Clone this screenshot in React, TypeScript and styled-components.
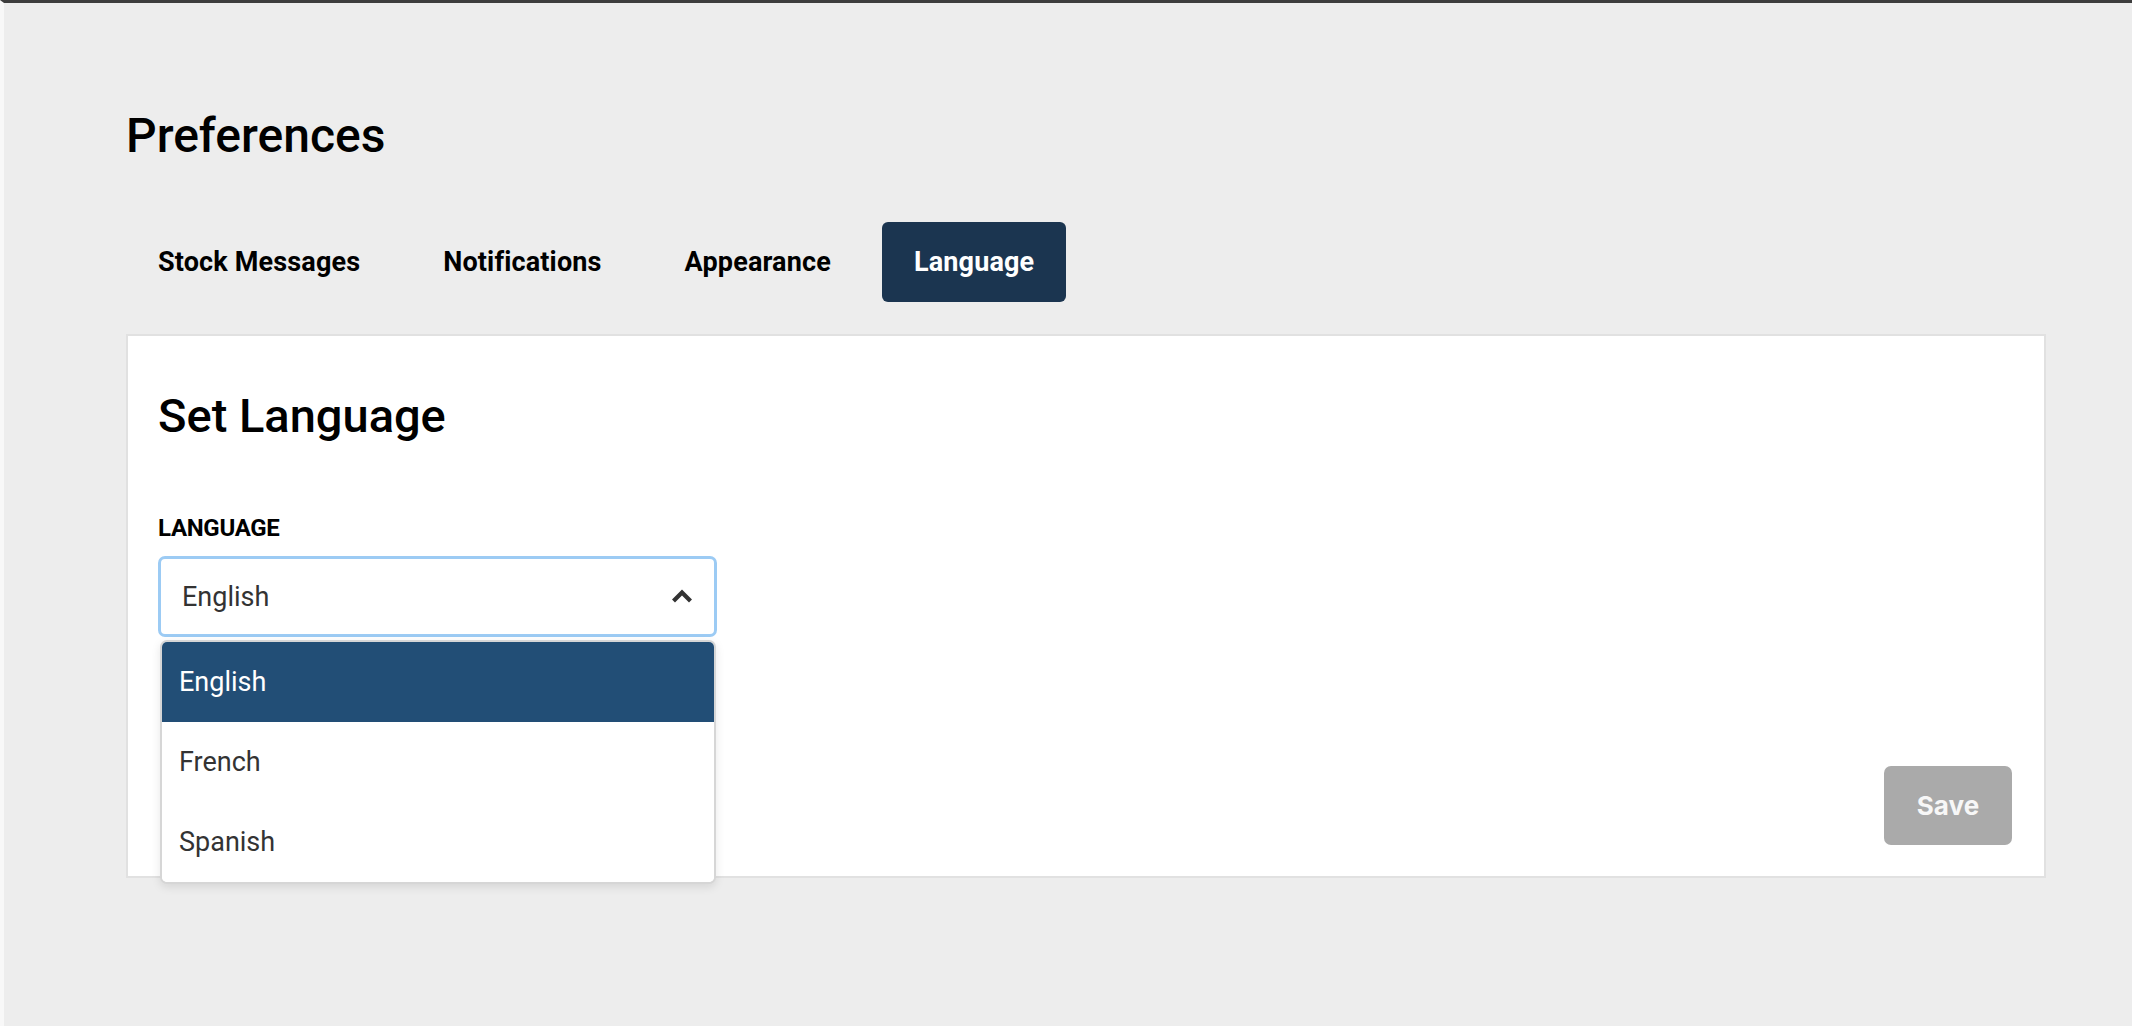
import { useState } from 'react'
import styled, { createGlobalStyle } from 'styled-components'

const GlobalStyle = createGlobalStyle`
  html, body {
    margin: 0;
    padding: 0;
  }
  body {
    font-family: Roboto, "Noto Sans", Arial, sans-serif;
    color: #000;
  }
  * {
    box-sizing: border-box;
  }
`

const tabs = ['Stock Messages', 'Notifications', 'Appearance', 'Language']
const languages = ['English', 'French', 'Spanish']

export default function App() {
  const [activeTab, setActiveTab] = useState('Language')
  const [language, setLanguage] = useState('English')

  return (
    <Frame>
      <GlobalStyle />
      <Main>
        <PageTitle>Preferences</PageTitle>
        <TabRow>
          {tabs.map((tab) => (
            <Tab key={tab} $active={tab === activeTab} onClick={() => setActiveTab(tab)}>
              {tab}
            </Tab>
          ))}
        </TabRow>
        <Panel>
          <PanelTitle>Set Language</PanelTitle>
          <FieldLabel>Language</FieldLabel>
          <SelectWrap>
            <SelectBox>
              <span>{language}</span>
              <svg width="24" height="16" viewBox="0 0 24 16">
                <polyline
                  points="3.5,13 12,4.5 20.5,13"
                  fill="none"
                  stroke="#333"
                  strokeWidth="4.2"
                  strokeLinejoin="miter"
                />
              </svg>
            </SelectBox>
            <Menu>
              {languages.map((lang) => (
                <MenuOption key={lang} $selected={lang === language} onClick={() => setLanguage(lang)}>
                  {lang}
                </MenuOption>
              ))}
            </Menu>
          </SelectWrap>
          <Footer>
            <SaveButton disabled>Save</SaveButton>
          </Footer>
        </Panel>
      </Main>
    </Frame>
  )
}

const Frame = styled.div`
  min-height: 100vh;
  background-color: #ededed;
  border-top: 3px solid #3d3d3d;
  border-left: 4px solid #f8f8f8;
`
const Main = styled.div`
  padding: 105px 0 0 122px;
`
const PageTitle = styled.h1`
  margin: 0;
  font-size: 48px;
  line-height: 56px;
  font-weight: 500;
`
const TabRow = styled.div`
  display: flex;
  gap: 19px;
  margin-top: 58px;
`
const Tab = styled.button<{ $active?: boolean }>`
  height: 80px;
  padding: 0 32px;
  border: none;
  border-radius: 6px;
  font-family: Roboto, "Noto Sans", Arial, sans-serif;
  font-size: 27px;
  font-weight: 700;
  letter-spacing: 0.15px;
  cursor: pointer;
  background-color: ${(p) => (p.$active ? '#1b3550' : 'transparent')};
  color: ${(p) => (p.$active ? '#ffffff' : '#000000')};
`
const Panel = styled.section`
  width: 1920px;
  margin-top: 32px;
  background-color: #fff;
  border: 2px solid #e1e1e1;
  padding: 52px 32px 31px 30px;
`
const PanelTitle = styled.h2`
  margin: 0;
  font-size: 47px;
  line-height: 56px;
  font-weight: 500;
`
const FieldLabel = styled.div`
  margin-top: 70px;
  font-size: 24px;
  line-height: 28px;
  font-weight: 700;
  text-transform: uppercase;
  letter-spacing: -0.3px;
`
const SelectWrap = styled.div`
  position: relative;
  width: 559px;
  margin-top: 14px;
`
const SelectBox = styled.div`
  height: 81px;
  display: flex;
  align-items: center;
  justify-content: space-between;
  padding: 0 20px 0 21px;
  border: 3px solid #9ccbf4;
  border-radius: 7px;
  background-color: #fff;
  font-size: 27px;
  color: #333;
  svg {
    margin-top: -2px;
  }
`
const Menu = styled.div`
  position: absolute;
  top: calc(100% + 3px);
  left: 2px;
  right: 1px;
  background-color: #fff;
  border: 2px solid #d6d6d6;
  border-radius: 7px;
  overflow: hidden;
  box-shadow: 0 3px 10px rgba(0, 0, 0, 0.1);
  z-index: 2;
`
const MenuOption = styled.div<{ $selected?: boolean }>`
  height: 80px;
  display: flex;
  align-items: center;
  padding-left: 17px;
  font-size: 27px;
  cursor: pointer;
  background-color: ${(p) => (p.$selected ? '#224e76' : '#fff')};
  color: ${(p) => (p.$selected ? '#fff' : '#333')};
`
const Footer = styled.div`
  display: flex;
  justify-content: flex-end;
  margin-top: 129px;
`
const SaveButton = styled.button`
  width: 128px;
  height: 79px;
  border: none;
  border-radius: 7px;
  background-color: #aaaaaa;
  color: #f7f7f7;
  font-family: Inter, "Liberation Sans", Arial, sans-serif;
  font-size: 26px;
  font-weight: 700;
`
